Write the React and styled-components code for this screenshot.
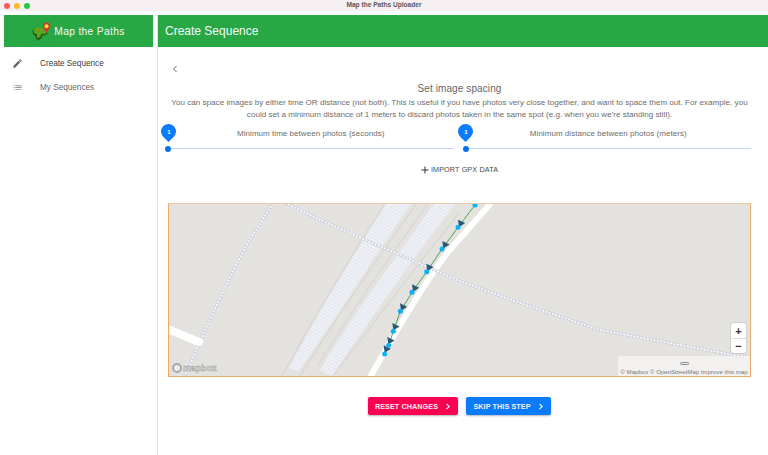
import React from 'react'
import styled, { createGlobalStyle } from 'styled-components'

const GlobalStyle = createGlobalStyle`
  html, body { margin: 0; padding: 0; background: #fff; }
  body { font-family: "Liberation Sans", Arial, sans-serif; overflow: hidden; }
  * { box-sizing: border-box; }
`

const Page = styled.div`
  width: 768px;
  height: 455px;
  display: flex;
  flex-direction: column;
`
const TitleBar = styled.div`
  height: 11px;
  background: #f6f0f3;
  display: flex;
  align-items: center;
  position: relative;
  padding-left: 4px;
  gap: 4px;
`
const Light = styled.span`
  width: 6px;
  height: 6px;
  border-radius: 50%;
  background: ${p => p.$color};
`
const WindowTitle = styled.div`
  position: absolute;
  left: 0;
  right: 0;
  top: 0;
  text-align: center;
  font-size: 6.6px;
  line-height: 9px;
  font-weight: 700;
  color: #5a5658;
`
const Body = styled.div`
  flex: 1;
  display: flex;
  padding-top: 4px;
`
const Sidebar = styled.aside`
  width: 158px;
  padding-left: 4px;
  border-right: 1px solid #e4e4e4;
`
const Brand = styled.div`
  width: 149px;
  height: 32px;
  background: #28a745;
  display: flex;
  align-items: center;
  justify-content: center;
  gap: 2px;
  color: #f3fbf4;
  font-size: 10.3px;
  letter-spacing: 0.3px;
`
const Nav = styled.nav`
  display: flex;
  flex-direction: column;
  padding-top: 4px;
`
const NavItem = styled.div`
  height: 24px;
  display: flex;
  align-items: center;
  gap: 17px;
  padding-left: 8px;
  font-size: 8.2px;
  color: ${p => (p.$active ? '#3a3a3a' : '#666')};
`
const NavIcon = styled.svg`
  width: 11px;
  height: 11px;
  fill: ${p => (p.$active ? '#666' : '#999')};
`
const Main = styled.main`
  flex: 1;
  display: flex;
  flex-direction: column;
`
const Header = styled.div`
  height: 32px;
  background: #28a745;
  color: #f6fcf7;
  font-size: 12px;
  line-height: 32px;
  padding-left: 7px;
`
const Content = styled.div`
  padding: 0 17px 0 10px;
  display: flex;
  flex-direction: column;
`
const Back = styled.svg`
  width: 10px;
  height: 10px;
  margin: 17px 0 0 2px;
  stroke: #666;
  fill: none;
`
const Heading = styled.h2`
  margin: 8px 0 0;
  text-align: center;
  font-size: 10px;
  line-height: 13px;
  font-weight: 400;
  color: #666;
  letter-spacing: 0.1px;
`
const Intro = styled.p`
  margin: 2px 0 0;
  text-align: center;
  font-size: 8.1px;
  line-height: 12px;
  color: #6d6d6d;
  white-space: nowrap;
`
const Sliders = styled.div`
  display: flex;
  gap: 12px;
  margin-top: 5px;
`
const SliderBox = styled.div`
  flex: 1;
  position: relative;
  height: 26px;
`
const SliderLabel = styled.div`
  text-align: center;
  font-size: 8px;
  line-height: 12px;
  padding-top: 2px;
  color: #6d6d6d;
  letter-spacing: 0.04px;
`
const Track = styled.div`
  position: absolute;
  left: 0;
  right: 0;
  top: 22px;
  height: 1px;
  background: #bcd7fb;
`
const Thumb = styled.span`
  position: absolute;
  left: -3px;
  top: -2.5px;
  width: 6px;
  height: 6px;
  border-radius: 50%;
  background: #0a6fe8;
`
const Pin = styled.span`
  position: absolute;
  left: -7.5px;
  top: -24.5px;
  width: 15px;
  height: 15px;
  border-radius: 50% 50% 50% 0;
  background: #0a7bfb;
  transform: rotate(-45deg);
  display: flex;
  align-items: center;
  justify-content: center;
`
const PinValue = styled.span`
  transform: rotate(45deg);
  color: #fff;
  font-size: 6px;
  font-weight: 700;
`
const ImportRow = styled.div`
  margin-top: 12px;
  display: flex;
  justify-content: center;
  align-items: center;
  gap: 2px;
  font-size: 7.2px;
  line-height: 12px;
  color: #4a4a4a;
  letter-spacing: 0.15px;
`
const PlusIcon = styled.svg`
  width: 8px;
  height: 8px;
  stroke: #333;
  stroke-width: 1;
`
const MapFrame = styled.div`
  position: relative;
  height: 174px;
  margin-top: 27px;
  border: 1px solid #edab6b;
  border-top-color: #f0c9a8;
  background: #e4e2de;
  overflow: hidden;
`
const MapCanvas = styled.svg`
  display: block;
  width: 100%;
  height: 100%;
`
const ZoomControl = styled.div`
  position: absolute;
  right: 4px;
  top: 119px;
  width: 15px;
  background: #fff;
  border-radius: 3px;
  box-shadow: 0 0 0 1px rgba(0, 0, 0, 0.08);
  display: flex;
  flex-direction: column;
`
const ZoomButton = styled.div`
  height: 15px;
  display: flex;
  align-items: center;
  justify-content: center;
  font-size: 11px;
  font-weight: 700;
  color: #333;
  & + & { border-top: 1px solid #ddd; }
`
const Attribution = styled.div`
  position: absolute;
  right: 0;
  bottom: 0;
  width: 132px;
  height: 20px;
  background: rgba(255, 255, 255, 0.5);
  display: flex;
  flex-direction: column;
  align-items: center;
  justify-content: flex-end;
  font-size: 6.1px;
  line-height: 9px;
  color: #777;
  white-space: nowrap;
`
const AttrMark = styled.span`
  width: 9px;
  height: 3px;
  border: 1px solid #888;
  border-radius: 2px;
  margin-bottom: 2px;
`
const MapboxLogo = styled.div`
  position: absolute;
  left: 3px;
  bottom: 3px;
  display: flex;
  align-items: center;
  gap: 1px;
  font-size: 8.8px;
  font-weight: 700;
  color: #eeeeec;
  -webkit-text-stroke: 0.5px #9c9c9c;
`
const MapboxDot = styled.span`
  width: 10px;
  height: 10px;
  border-radius: 50%;
  border: 2px solid #a9a9a9;
  background: #eee;
`
const Actions = styled.div`
  margin-top: 20px;
  display: flex;
  justify-content: center;
  gap: 8px;
`
const ActionButton = styled.button`
  height: 18px;
  width: ${p => p.$width}px;
  border: 0;
  border-radius: 2px;
  background: ${p => p.$color};
  color: #fbeef2;
  font-family: inherit;
  font-size: 7.2px;
  font-weight: 700;
  letter-spacing: 0.1px;
  display: flex;
  align-items: center;
  justify-content: center;
  gap: 7px;
  padding: 0;
  box-shadow: 0 1px 2px rgba(0, 0, 0, 0.3);
`
const Chevron = styled.svg`
  width: 6px;
  height: 7px;
  stroke: #fff;
  stroke-width: 1.1;
  fill: none;
`

const dots = [[345, 30], [294, 97], [246, 162], [200, 230], [156, 292], [121, 349], [100, 409], [86, 451], [74, 477]]
  .map(([x, y]) => [360 + x / 3, 195 + y / 3])
const arrows = [[303, 86], [256, 150], [208, 218], [165, 280], [129, 337], [106, 396], [91, 438], [80, 463]]
  .map(([x, y]) => [360 + x / 3, 195 + y / 3])

const road1 = 'M273 203 C262 222 250 238 243 252 C228 280 215 308 203 335 L185 376'
const road2 = 'M285 203 L327 223 L457 280 L520 303 L600 330 L750 358'

const Logo = () => (
  <svg width="20" height="19" viewBox="0 0 20 19">
    <path d="M0.5 8.5 L5 5 L9 4.5 L12.5 8 L16 11 L13 13.5 L10.5 13.5 L9 17 L5 18.5 L3.5 14.5 L1 12 Z" fill="#2d5a12" />
    <path d="M1.5 8 L5 5 L9 4.5 L12 7.5 L15 10.5 L12.5 12 L9.5 11.5 L8 15 L5 16 L5 12.5 L2 11 Z" fill="#58a81f" />
    <circle cx="6" cy="8.5" r="0.9" fill="#c9603a" />
    <circle cx="10" cy="9" r="0.7" fill="#c9603a" />
    <path d="M14.5 0.5 a3.6 3.6 0 0 1 3.6 3.6 c0 2.2-2.2 3.9-3.6 6.9 c-1.4-3-3.6-4.7-3.6-6.9 A3.6 3.6 0 0 1 14.5 0.5 Z" fill="#d8322e" />
    <circle cx="14.5" cy="4.2" r="2" fill="#f7e32c" />
  </svg>
)

const MapDrawing = () => (
  <MapCanvas viewBox="169 204 581 172" preserveAspectRatio="none">
    <defs>
      <pattern id="hatch" width="3" height="3" patternUnits="userSpaceOnUse" patternTransform="rotate(30)">
        <rect width="3" height="3" fill="#e7e9f2" />
        <rect width="3" height="1" fill="#f3f4fa" />
      </pattern>
    </defs>
    <path d="M387 203 L412 203 C370 262 335 320 298 372 L289 368 C320 310 352 258 387 203 Z" fill="url(#hatch)" />
    <path d="M435 203 L456 203 C410 262 370 320 332 376 L320 370 C355 312 395 258 435 203 Z" fill="url(#hatch)" />
    <g fill="none" stroke="#c9c8c5" strokeWidth="0.6">
      <path d="M385 203 C350 258 315 315 282 376" />
      <path d="M417 203 C375 262 335 320 300 376" />
      <path d="M429 203 C385 262 350 315 318 365" />
      <path d="M460 212 C415 268 372 325 333 376" />
    </g>
    <path d="M491 203 L448 252 C430 275 418 296 403 320 L370 377" fill="none" stroke="#fff" strokeWidth="6" />
    <g fill="none" strokeLinejoin="round">
      <path d={road1} stroke="#cdd0de" strokeWidth="3" />
      <path d={road1} stroke="#fff" strokeWidth="1.6" strokeDasharray="2 1.4" />
      <path d={road2} stroke="#cdd0de" strokeWidth="3" />
      <path d={road2} stroke="#fff" strokeWidth="1.6" strokeDasharray="2 1.4" />
    </g>
    <path d="M165 328 L199 342" stroke="#fff" strokeWidth="8" strokeLinecap="round" />
    <polyline points={dots.map(d => d.join(',')).join(' ')} fill="none" stroke="#3a9d3f" strokeWidth="0.9" />
    {arrows.map(([x, y]) => (
      <polygon key={x} points={`${x - 3},${y - 4} ${x + 4.2},${y - 0.6} ${x - 2},${y + 3.6}`} fill="#2a5878" />
    ))}
    {dots.map(([x, y]) => (
      <circle key={x} cx={x} cy={y} r="2.5" fill="#0db1f2" />
    ))}
  </MapCanvas>
)

const Slider = ({ label }) => (
  <SliderBox>
    <SliderLabel>{label}</SliderLabel>
    <Track>
      <Thumb />
      <Pin><PinValue>1</PinValue></Pin>
    </Track>
  </SliderBox>
)

const ChevronRight = () => (
  <Chevron viewBox="0 0 6 7"><path d="M1.5 0.8 L4.2 3.5 L1.5 6.2" /></Chevron>
)

export default function App() {
  return (
    <Page>
      <GlobalStyle />
      <TitleBar>
        <Light $color="#fc5f57" />
        <Light $color="#fdbb2e" />
        <Light $color="#28c840" />
        <WindowTitle>Map the Paths Uploader</WindowTitle>
      </TitleBar>
      <Body>
        <Sidebar>
          <Brand>
            <Logo />
            Map the Paths
          </Brand>
          <Nav>
            <NavItem $active>
              <NavIcon $active viewBox="0 0 24 24">
                <path d="M3 17.25V21h3.75L17.81 9.94l-3.75-3.75L3 17.25zM20.71 7.04c.39-.39.39-1.02 0-1.41l-2.34-2.34c-.39-.39-1.02-.39-1.41 0l-1.83 1.83 3.75 3.75 1.83-1.83z" />
              </NavIcon>
              Create Sequence
            </NavItem>
            <NavItem>
              <NavIcon viewBox="0 0 24 24">
                <path d="M3 13h2v-2H3v2zm0 4h2v-2H3v2zm0-8h2V7H3v2zm4 4h14v-2H7v2zm0 4h14v-2H7v2zM7 7v2h14V7H7z" />
              </NavIcon>
              My Sequences
            </NavItem>
          </Nav>
        </Sidebar>
        <Main>
          <Header>Create Sequence</Header>
          <Content>
            <Back viewBox="0 0 10 10"><path d="M6.5 2 L3.5 5 L6.5 8" /></Back>
            <Heading>Set image spacing</Heading>
            <Intro>
              You can space images by either time OR distance (not both). This is useful if you have photos very close together, and want to space them out. For example, you
              <br />
              could set a minimum distance of 1 meters to discard photos taken in the same spot (e.g. when you we're standing still).
            </Intro>
            <Sliders>
              <Slider label="Minimum time between photos (seconds)" />
              <Slider label="Minimum distance between photos (meters)" />
            </Sliders>
            <ImportRow>
              <PlusIcon viewBox="0 0 8 8"><path d="M4 0.5 V7.5 M0.5 4 H7.5" /></PlusIcon>
              IMPORT GPX DATA
            </ImportRow>
            <MapFrame>
              <MapDrawing />
              <MapboxLogo><MapboxDot />mapbox</MapboxLogo>
              <ZoomControl>
                <ZoomButton>+</ZoomButton>
                <ZoomButton>−</ZoomButton>
              </ZoomControl>
              <Attribution>
                <AttrMark />
                © Mapbox © OpenStreetMap Improve this map
              </Attribution>
            </MapFrame>
            <Actions>
              <ActionButton $color="#fb0052" $width={90}>RESET CHANGES <ChevronRight /></ActionButton>
              <ActionButton $color="#0a7bfb" $width={85}>SKIP THIS STEP <ChevronRight /></ActionButton>
            </Actions>
          </Content>
        </Main>
      </Body>
    </Page>
  )
}
